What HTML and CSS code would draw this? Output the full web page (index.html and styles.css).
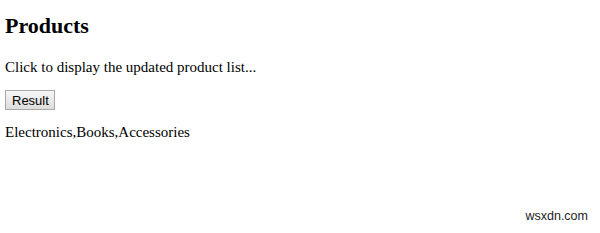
FILE: index.html
```html
<!DOCTYPE html>
<html>
<head>
<meta charset="utf-8">
<link rel="stylesheet" href="styles.css">
</head>
<body>
<h2 class="title">Products</h2>
<p class="intro">Click to display the updated product list...</p>
<button class="btn">Result</button>
<p class="result">Electronics,Books,Accessories</p>
<div class="mark">wsxdn.com</div>
</body>
</html>
```
FILE: styles.css
```css
html, body {
  margin: 0;
  padding: 0;
  background: #fff;
}
body {
  padding: 13px 0 0 5px;
  width: 595px;
  height: 220px;
  position: relative;
  font-family: "Liberation Serif", "Times New Roman", serif;
  font-size: 15px;
  color: #000;
}
.title {
  margin: 0 0 20px;
  font-size: 22px;
  font-weight: bold;
}
.intro {
  margin: 0 0 14px;
}
.btn {
  display: block;
  font-family: "Liberation Sans", Arial, sans-serif;
  font-size: 13px;
  padding: 1px 6px;
  width: 50px;
  height: 20px;
  border: 1px solid #a9a9a9;
  border-radius: 0;
  background: linear-gradient(#f6f6f6, #dddddd);
  color: #000;
  margin: 0;
}
.result {
  margin: 14px 0 0;
}
.mark {
  position: absolute;
  right: 12px;
  bottom: 10px;
  font-family: "Liberation Sans", Arial, sans-serif;
  font-size: 12.5px;
  color: #222;
}
```
